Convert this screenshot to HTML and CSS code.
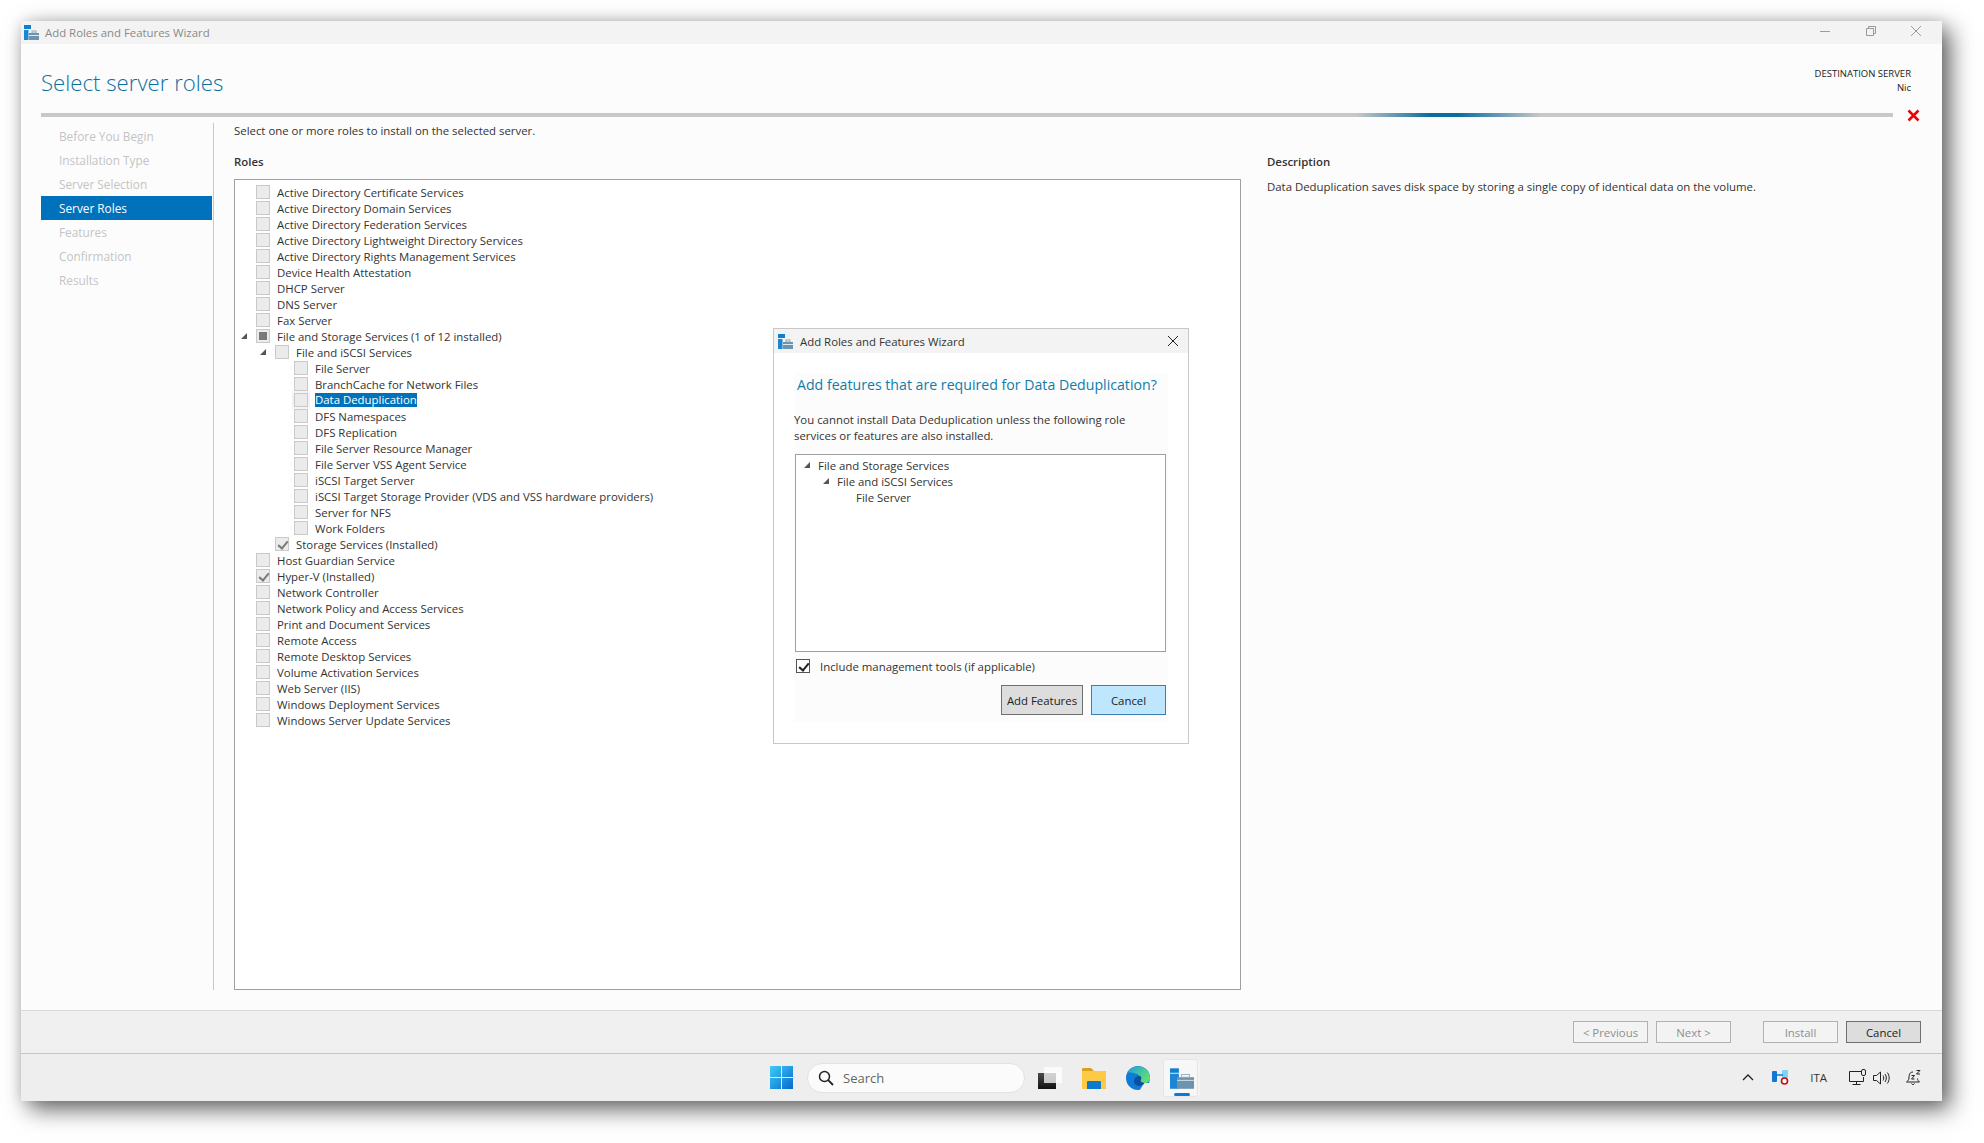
FILE: index.html
```html
<!DOCTYPE html>
<html lang="en">
<head>
    <meta charset="UTF-8">
    <title>Add Roles and Features Wizard</title>
    <link rel="stylesheet" href="styles.css">
</head>
<body>
    <svg class="defs" width="0" height="0">
        <symbol id="app-icon" viewBox="0 0 15 15">
            <rect x="0" y="0" width="7" height="4" fill="#0f7fd0"/>
            <rect x="0" y="5" width="4.5" height="10" fill="#1c86d4"/>
            <rect x="8" y="6" width="4" height="2" fill="none" stroke="#8fa9bb"/>
            <rect x="5" y="8" width="10" height="7" fill="#6d93ad"/>
            <rect x="5" y="10" width="10" height="1" fill="#dfe8ee"/>
        </symbol>
    </svg>

    <div class="window">
        <div class="titlebar">
            <svg class="app-small"><use href="#app-icon"/></svg>
            <span class="title-text">Add Roles and Features Wizard</span>
            <div class="win-controls">
                <svg width="12" height="12" viewBox="0 0 12 12"><path d="M0 6.500h10" stroke="#9a9a9a" fill="none"/></svg>
                <svg width="12" height="12" viewBox="0 0 12 12"><path d="M1.500 3.500h7v7h-7zM3.500 3.500v-2h7v7h-2" stroke="#9a9a9a" fill="none"/></svg>
                <svg width="12" height="12" viewBox="0 0 12 12"><path d="M1 1l10 10M11 1L1 11" stroke="#9a9a9a" fill="none"/></svg>
            </div>
        </div>

        <div class="content">
            <div class="page-head">
                <h1>Select server roles</h1>
                <div class="dest">DESTINATION SERVER<br>Nic</div>
            </div>
            <div class="progress-row">
                <div class="progress"></div>
                <svg class="red-x" width="13" height="13" viewBox="0 0 13 13"><path d="M1.500 1.500l10 10M11.500 1.500l-10 10" stroke="#f00000" stroke-width="2.600" fill="none"/></svg>
            </div>

            <div class="body">
                <nav class="steps">
                    <div class="step">Before You Begin</div>
                    <div class="step">Installation Type</div>
                    <div class="step">Server Selection</div>
                    <div class="step active">Server Roles</div>
                    <div class="step">Features</div>
                    <div class="step">Confirmation</div>
                    <div class="step">Results</div>
                </nav>

                <main class="main">
                    <p class="intro">Select one or more roles to install on the selected server.</p>
                    <div class="columns">
                        <section class="roles">
                            <h2>Roles</h2>
                            <div class="tree">
                                <div class="row"><i class="twisty"></i><b class="box"></b><span>Active Directory Certificate Services</span></div>
                                <div class="row"><i class="twisty"></i><b class="box"></b><span>Active Directory Domain Services</span></div>
                                <div class="row"><i class="twisty"></i><b class="box"></b><span>Active Directory Federation Services</span></div>
                                <div class="row"><i class="twisty"></i><b class="box"></b><span>Active Directory Lightweight Directory Services</span></div>
                                <div class="row"><i class="twisty"></i><b class="box"></b><span>Active Directory Rights Management Services</span></div>
                                <div class="row"><i class="twisty"></i><b class="box"></b><span>Device Health Attestation</span></div>
                                <div class="row"><i class="twisty"></i><b class="box"></b><span>DHCP Server</span></div>
                                <div class="row"><i class="twisty"></i><b class="box"></b><span>DNS Server</span></div>
                                <div class="row"><i class="twisty"></i><b class="box"></b><span>Fax Server</span></div>
                                <div class="row"><i class="twisty open"></i><b class="box partial"></b><span>File and Storage Services (1 of 12 installed)</span></div>
                                <div class="row level-1"><i class="twisty open"></i><b class="box"></b><span>File and iSCSI Services</span></div>
                                <div class="row level-2"><i class="twisty"></i><b class="box"></b><span>File Server</span></div>
                                <div class="row level-2"><i class="twisty"></i><b class="box"></b><span>BranchCache for Network Files</span></div>
                                <div class="row level-2 selected"><i class="twisty"></i><b class="box"></b><span>Data Deduplication</span></div>
                                <div class="row level-2"><i class="twisty"></i><b class="box"></b><span>DFS Namespaces</span></div>
                                <div class="row level-2"><i class="twisty"></i><b class="box"></b><span>DFS Replication</span></div>
                                <div class="row level-2"><i class="twisty"></i><b class="box"></b><span>File Server Resource Manager</span></div>
                                <div class="row level-2"><i class="twisty"></i><b class="box"></b><span>File Server VSS Agent Service</span></div>
                                <div class="row level-2"><i class="twisty"></i><b class="box"></b><span>iSCSI Target Server</span></div>
                                <div class="row level-2"><i class="twisty"></i><b class="box"></b><span>iSCSI Target Storage Provider (VDS and VSS hardware providers)</span></div>
                                <div class="row level-2"><i class="twisty"></i><b class="box"></b><span>Server for NFS</span></div>
                                <div class="row level-2"><i class="twisty"></i><b class="box"></b><span>Work Folders</span></div>
                                <div class="row level-1"><i class="twisty"></i><b class="box checked"></b><span>Storage Services (Installed)</span></div>
                                <div class="row"><i class="twisty"></i><b class="box"></b><span>Host Guardian Service</span></div>
                                <div class="row"><i class="twisty"></i><b class="box checked"></b><span>Hyper-V (Installed)</span></div>
                                <div class="row"><i class="twisty"></i><b class="box"></b><span>Network Controller</span></div>
                                <div class="row"><i class="twisty"></i><b class="box"></b><span>Network Policy and Access Services</span></div>
                                <div class="row"><i class="twisty"></i><b class="box"></b><span>Print and Document Services</span></div>
                                <div class="row"><i class="twisty"></i><b class="box"></b><span>Remote Access</span></div>
                                <div class="row"><i class="twisty"></i><b class="box"></b><span>Remote Desktop Services</span></div>
                                <div class="row"><i class="twisty"></i><b class="box"></b><span>Volume Activation Services</span></div>
                                <div class="row"><i class="twisty"></i><b class="box"></b><span>Web Server (IIS)</span></div>
                                <div class="row"><i class="twisty"></i><b class="box"></b><span>Windows Deployment Services</span></div>
                                <div class="row"><i class="twisty"></i><b class="box"></b><span>Windows Server Update Services</span></div>
                            </div>
                        </section>
                        <section class="description">
                            <h2>Description</h2>
                            <p>Data Deduplication saves disk space by storing a single copy of identical data on the volume.</p>
                        </section>
                    </div>
                </main>
            </div>
        </div>

        <div class="footer">
            <button class="btn" disabled>&lt; Previous</button>
            <button class="btn" disabled>Next &gt;</button>
            <button class="btn install" disabled>Install</button>
            <button class="btn primary">Cancel</button>
        </div>

        <div class="taskbar">
            <div class="task-center">
                <svg class="win-logo" width="23" height="23" viewBox="0 0 23 23">
                    <defs>
                        <linearGradient id="winblue" x1="0" y1="0" x2="1" y2="1">
                            <stop offset="0" stop-color="#3fcdf7"/>
                            <stop offset="1" stop-color="#0669cf"/>
                        </linearGradient>
                    </defs>
                    <path d="M0 0h11v11H0zM12 0h11v11H12zM0 12h11v11H0zM12 12h11v11H12z" fill="url(#winblue)"/>
                </svg>
                <div class="search">
                    <svg width="16" height="16" viewBox="0 0 16 16"><circle cx="6.500" cy="6.500" r="5" stroke="#222" stroke-width="1.500" fill="none"/><path d="M10.200 10.200L15 15" stroke="#222" stroke-width="1.800" fill="none"/></svg>
                    <span>Search</span>
                </div>
                <svg class="task-icon task-view" width="24" height="22" viewBox="0 0 24 22">
                    <defs>
                        <linearGradient id="tvdark" x1="0" y1="0" x2="0" y2="1">
                            <stop offset="0" stop-color="#4a4a4a"/>
                            <stop offset="1" stop-color="#111"/>
                        </linearGradient>
                    </defs>
                    <rect x="0" y="6" width="18" height="16" fill="url(#tvdark)"/>
                    <rect x="6" y="0" width="18" height="16" fill="#fff" fill-opacity=".75"/>
                </svg>
                <svg class="task-icon folder" width="24" height="22" viewBox="0 0 24 22">
                    <path d="M0 2a1 1 0 0 1 1-1h8l3 3H0z" fill="#d9a01f"/>
                    <rect x="0" y="4" width="24" height="18" fill="#fcca47"/>
                    <path d="M5 15a1 1 0 0 1 1-1h12a1 1 0 0 1 1 1v7H5z" fill="#0c79cf"/>
                </svg>
                <svg class="task-icon edge" width="24" height="24" viewBox="0 0 24 24">
                    <defs>
                        <linearGradient id="edgetop" x1="0" y1="0" x2="1" y2=".6">
                            <stop offset="0" stop-color="#1b9fe0"/>
                            <stop offset="1" stop-color="#62de72"/>
                        </linearGradient>
                    </defs>
                    <circle cx="12" cy="12" r="12" fill="#0f7bd6"/>
                    <path d="M24 17h-5.500c-2 2-3 4-4.500 7h10z" fill="#eeeeee"/>
                    <path d="M1.500 6.500A12 12 0 0 1 24 12c0 3-2 5-5.500 5-3 0-4.500-1-4.500-2 1-1 1.800-2 1-3.800C13 7.500 6 6 1.500 6.500z" fill="url(#edgetop)"/>
                    <path d="M8 15.500c0-3.500 3-6 6-5.500 1.500.5 1.600 2.500.5 4.500 0 1.500 2 2.500 4 2.500-1.500 2-4 3.500-6 3-3-.5-4.500-2.500-4.500-4.500z" fill="#0c4f9a"/>
                </svg>
                <div class="task-app">
                    <svg width="24" height="24" viewBox="0 0 27 24">
                        <rect x="0" y="0" width="10" height="5" fill="#0f7fd0"/>
                        <rect x="0" y="6" width="10" height="17" fill="#1c86d4"/>
                        <rect x="8" y="10" width="19" height="13" fill="#6d93ad"/>
                        <rect x="13" y="7" width="9" height="3" fill="none" stroke="#8fa9bb"/>
                        <rect x="8" y="13" width="19" height="1" fill="#dfe8ee"/>
                    </svg>
                    <i class="running"></i>
                </div>
            </div>
            <div class="tray">
                <svg class="tray-up" width="12" height="7" viewBox="0 0 12 7"><path d="M1 6l5-5 5 5" stroke="#222" stroke-width="1.300" fill="none"/></svg>
                <svg class="tray-net" width="17" height="15" viewBox="0 0 17 15">
                    <rect x="0" y="1" width="5" height="11" rx="1" fill="#1277cf"/>
                    <rect x="10" y="0" width="6" height="8" rx="1" fill="#7fd3f5"/>
                    <path d="M5 5h6" stroke="#1277cf" stroke-width="1.500"/>
                    <circle cx="12.500" cy="11" r="3" fill="#fff" stroke="#c00d0d" stroke-width="1.600"/>
                </svg>
                <span class="tray-lang">ITA</span>
                <svg class="tray-monitor" width="17" height="17" viewBox="0 0 17 17"><path d="M12 2.500H.500v10h14V8M3.500 15.500h8M7.500 12.500v3" stroke="#222" fill="none"/><rect x="12.500" y=".500" width="4" height="6" rx="1.500" stroke="#222" fill="#eee"/></svg>
                <svg class="tray-sound" width="17" height="14" viewBox="0 0 17 14"><path d="M.500 4.500h3l4-3.500v12l-4-3.500h-3z" stroke="#222" fill="none"/><path d="M10 4.500c1 1.500 1 3.500 0 5M12 3c1.800 2.300 1.800 5.700 0 8M14.300 1.500c2.500 3.300 2.500 7.700 0 11" stroke="#222" fill="none"/></svg>
                <svg class="tray-bell" width="15" height="16" viewBox="0 0 15 16"><path d="M7 2C3.500 2 3 5 3 8c0 2-1.500 3-2.500 4h13c-1-1-2-2-2-3.500M5.500 13.500c.5 1.400 2.500 1.400 3 0" stroke="#222" fill="none"/><path d="M5.500 5.500h3l-3 3.500h3M10.500 .5h3.500l-3.500 3.500h3.500" stroke="#222" fill="none"/></svg>
            </div>
        </div>

        <div class="dialog">
            <div class="dialog-title">
                <svg class="app-small"><use href="#app-icon"/></svg>
                <span>Add Roles and Features Wizard</span>
                <svg class="dialog-close" width="12" height="12" viewBox="0 0 12 12"><path d="M1 1l10 10M11 1L1 11" stroke="#222" fill="none"/></svg>
            </div>
            <div class="dialog-body">
                <h3>Add features that are required for Data Deduplication?</h3>
                <p>You cannot install Data Deduplication unless the following role services or features are also installed.</p>
                <div class="dep-tree">
                    <div class="dep"><i class="twisty open"></i><span>File and Storage Services</span></div>
                    <div class="dep dep-1"><i class="twisty open"></i><span>File and iSCSI Services</span></div>
                    <div class="dep dep-2"><i class="twisty"></i><span>File Server</span></div>
                </div>
                <label class="include"><b class="tick"></b><span>Include management tools (if applicable)</span></label>
                <div class="dialog-buttons">
                    <button class="btn primary add">Add Features</button>
                    <button class="btn hot">Cancel</button>
                </div>
            </div>
        </div>
    </div>
</body>
</html>
```
FILE: styles.css
```css
* {
    box-sizing: border-box;
}
html, body {
    margin: 0;
    height: 100%;
    background: #fff;
    overflow: hidden;
}
body {
    font-family: "Open Sans", "Noto Sans", sans-serif;
    font-size: 11.4px;
    color: #333;
    padding: 21px 0 0 21px;
}
.defs {
    position: absolute;
}
.window {
    position: relative;
    width: 1921px;
    height: 1080px;
    background: #fcfcfc;
    display: flex;
    flex-direction: column;
    box-shadow: 8px 8px 22px rgba(0, 0, 0, 0.62), 0 0 12px rgba(0, 0, 0, 0.1);
}

/* title bar */
.titlebar {
    height: 23px;
    background: #f3f3f3;
    display: flex;
    align-items: center;
    padding-left: 3px;
    color: #8a8a8a;
    flex: none;
}
.app-small {
    width: 15px;
    height: 15px;
    flex: none;
}
.title-text {
    margin-left: 6px;
}
.win-controls {
    margin-left: auto;
    display: flex;
    gap: 33px;
    padding-right: 20px;
    margin-top: -3px;
}

.content {
    flex: 1;
    display: flex;
    flex-direction: column;
    min-height: 0;
}
.page-head {
    height: 69px;
    display: flex;
    justify-content: space-between;
    padding: 23px 31px 0 20px;
}
h1 {
    margin: 0;
    font-size: 22.2px;
    font-weight: 300;
    color: #0b6f9e;
    line-height: 32px;
}
.dest {
    font-size: 9.5px;
    line-height: 14px;
    text-align: right;
    color: #222;
    margin-top: 0;
}
.progress-row {
    display: flex;
    align-items: center;
    height: 4px;
    padding-left: 20px;
}
.progress {
    width: 1852px;
    height: 4px;
    background: linear-gradient(90deg, #c8c8c8 0, #c8c8c8 71%, #0a6d9f 75%, #0a6d9f 76.5%, #c8c8c8 81%, #c8c8c8 100%);
}
.red-x {
    margin-left: 14px;
    flex: none;
}

.body {
    flex: 1;
    display: flex;
    padding-top: 6px;
    padding-bottom: 20px;
    min-height: 0;
}
.steps {
    width: 171px;
    margin-left: 20px;
    padding-top: 1px;
    flex: none;
}
.step {
    height: 24px;
    line-height: 24px;
    padding-left: 18px;
    font-size: 11.8px;
    color: #c4c4c4;
}
.step.active {
    background: #0072bc;
    color: #fff;
}
.main {
    flex: 1;
    margin-left: 1px;
    border-left: 1px solid #c8c8c8;
    padding-left: 20px;
    display: flex;
    flex-direction: column;
    min-height: 0;
}
.intro {
    margin: 0;
    height: 24px;
    line-height: 16px;
    color: #333;
}
.columns {
    flex: 1;
    display: flex;
    min-height: 0;
}
h2 {
    margin: 0;
    font-size: 11.4px;
    font-weight: 600;
    line-height: 16px;
    height: 32px;
    padding-top: 7px;
    color: #333;
}
.roles {
    width: 1007px;
    flex: none;
    display: flex;
    flex-direction: column;
}
.tree {
    flex: 1;
    border: 1px solid #a0a0a0;
    background: #fff;
    padding: 4px 0 0 6px;
}
.row {
    height: 16px;
    display: flex;
    align-items: center;
}
.level-1 {
    padding-left: 19px;
}
.level-2 {
    padding-left: 38px;
}
.twisty {
    width: 15px;
    flex: none;
    display: block;
}
.twisty.open::before {
    content: "";
    display: block;
    width: 0;
    height: 0;
    border-style: solid;
    border-width: 0 0 6px 6px;
    border-color: transparent transparent #555 transparent;
}
.box {
    width: 14px;
    height: 14px;
    border: 1px solid #c9c9c9;
    background: #ebebeb;
    margin-right: 7px;
    flex: none;
    position: relative;
}
.box.partial::after {
    content: "";
    position: absolute;
    left: 2px;
    top: 2px;
    width: 8px;
    height: 8px;
    background: #7a7a7a;
}
.box.checked::after, .tick::after {
    content: "";
    position: absolute;
    left: 4px;
    top: 1px;
    width: 4px;
    height: 8px;
    border: solid #7a7a7a;
    border-width: 0 2px 2px 0;
    transform: rotate(40deg);
}
.selected span {
    background: #0072bc;
    color: #fff;
    line-height: 14px;
    height: 14px;
}
.selected .box {
    outline: 2px solid #f2f2f2;
}
.description {
    margin-left: 26px;
    flex: 1;
}
.description p {
    margin: 0;
    line-height: 16px;
}

/* wizard footer */
.footer {
    height: 43px;
    flex: none;
    background: #f0f0f0;
    border-top: 1px solid #d8d8d8;
    display: flex;
    justify-content: flex-end;
    align-items: flex-start;
    gap: 8px;
    padding: 10px 21px 0 0;
}
.btn {
    width: 75px;
    height: 22px;
    font: inherit;
    padding: 0;
    background: #f3f3f3;
    border: 1px solid #adb2b5;
    color: #8f8f8f;
}
.install {
    margin-left: 24px;
}
.primary {
    background: #dddddd;
    border-color: #707070;
    color: #222;
}

/* taskbar */
.taskbar {
    height: 48px;
    flex: none;
    background: #eeeeee;
    border-top: 1px solid #c6c6c6;
    display: flex;
    align-items: center;
    padding-left: 749px;
    position: relative;
}
.task-center {
    display: flex;
    align-items: center;
}
.search {
    width: 218px;
    height: 30px;
    margin-left: 14px;
    background: #fbfbfb;
    border: 1px solid #e2e2e2;
    border-radius: 15px;
    display: flex;
    align-items: center;
    padding-left: 10px;
    font-size: 13px;
    color: #666;
}
.search span {
    margin-left: 9px;
}
.task-view {
    margin-left: 13px;
    margin-top: 1px;
}
.folder {
    margin-left: 20px;
}
.edge {
    margin-left: 20px;
}
.task-app {
    width: 35px;
    height: 38px;
    margin-left: 13px;
    background: #f7f7f7;
    border: 1px solid #e6e6e6;
    border-radius: 3px;
    box-shadow: 3px 0 0 -1px #f4f4f4;
    padding: 7px 0 0 6px;
    position: relative;
}
.running {
    position: absolute;
    left: 10px;
    bottom: 0;
    width: 16px;
    height: 3px;
    border-radius: 2px;
    background: #0f78d4;
}
.tray {
    margin-left: auto;
    display: flex;
    align-items: center;
    padding-right: 21px;
    color: #333;
}
.tray-net {
    margin-left: 18px;
}
.tray-lang {
    margin-left: 21px;
    font-size: 11.5px;
}
.tray-monitor {
    margin-left: 22px;
}
.tray-sound {
    margin-left: 7px;
}
.tray-bell {
    margin-left: 16px;
}

/* modal dialog */
.dialog {
    position: absolute;
    left: 752px;
    top: 307px;
    width: 416px;
    height: 416px;
    background: #fff;
    border: 1px solid #c8c8c8;
    color: #333;
}
.dialog-title {
    height: 24px;
    background: #f3f3f3;
    display: flex;
    align-items: center;
    padding-left: 4px;
    color: #333;
}
.dialog-title span {
    margin-left: 7px;
}
.dialog-close {
    margin-left: auto;
    margin-right: 9px;
}
.dialog-body {
    margin: 20px 20px 0 20px;
    background: #fcfcfc;
    height: 349px;
}
.dialog-body h3 {
    margin: 0;
    padding: 1px 0 0 3px;
    font-size: 14.15px;
    font-weight: 400;
    color: #0f7cab;
    line-height: 22px;
    white-space: nowrap;
}
.dialog-body p {
    margin: 16px 0 0;
    line-height: 16px;
    width: 350px;
}
.dep-tree {
    margin: 10px 2px 0 1px;
    height: 198px;
    border: 1px solid #a0a0a0;
    background: #fff;
    padding: 2px 0 0 8px;
}
.dep {
    height: 16px;
    display: flex;
    align-items: center;
}
.dep .twisty {
    width: 10px;
}
.dep span {
    margin-left: 4px;
}
.dep-1 {
    padding-left: 19px;
}
.dep-2 {
    padding-left: 38px;
}
.include {
    display: flex;
    align-items: center;
    height: 16px;
    margin: 6px 0 0 2px;
}
.tick {
    width: 14px;
    height: 14px;
    border: 1px solid #555;
    background: #fff;
    margin-right: 10px;
    position: relative;
}
.tick::after {
    border-color: #222;
}
.dialog-buttons {
    display: flex;
    justify-content: flex-end;
    gap: 8px;
    margin-top: 11px;
    padding-right: 2px;
}
.dialog-buttons .btn {
    height: 30px;
}
.add {
    width: 82px;
}
.hot {
    background: #bee6fd;
    border-color: #3c7fb1;
    color: #222;
}
```
